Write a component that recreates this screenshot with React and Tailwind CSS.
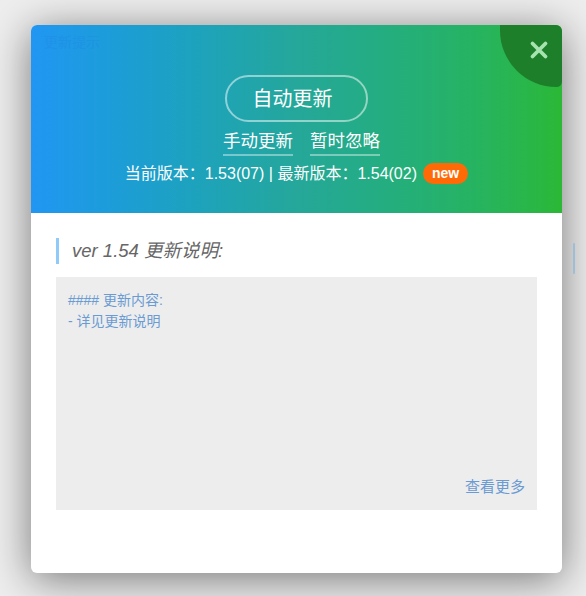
import React from "react";

export default function App() {
  const font = { fontFamily: '"Liberation Sans", "Noto Sans CJK SC", sans-serif' };
  return (
    <div
      className="relative w-[586px] h-[596px] overflow-hidden bg-[#eeeeee] pt-[25px] pl-[31px]"
      style={font}
    >
      <div className="relative w-[531px] h-[548px] rounded-[6px] bg-white shadow-[0_6px_42px_rgba(0,0,0,0.5)] overflow-hidden flex flex-col">
        {/* header */}
        <div className="relative h-[188px] bg-gradient-to-r from-[#2196f3] via-[#25a79a] to-[#2bb835] flex flex-col items-center pt-[50px]">
          <div className="absolute left-[13px] top-[7px] text-[14px] text-[#1f8fe6] opacity-60">更新提示</div>
          <div className="absolute right-0 top-0 w-[62px] h-[62px] bg-[#1e7f2b] rounded-bl-[100%] rounded-br-[6px] flex items-start justify-end pt-[15px] pr-[13px]">
            <svg width="20" height="20" viewBox="0 0 20 20">
              <path d="M3.5 3.5 L16.5 16.5 M16.5 3.5 L3.5 16.5" stroke="#a7e3ae" strokeWidth="3.8" strokeLinecap="round" />
            </svg>
          </div>
          <div className="w-[143px] h-[47px] rounded-full border-2 border-white/50 flex items-center justify-center text-white text-[20px] pt-[1px] pr-[8px]">
            自动更新
          </div>
          <div className="flex gap-[17px] mt-[7px] ml-[10px]">
            <span className="text-white text-[17.5px] leading-[25px] border-b-2 border-white/40">手动更新</span>
            <span className="text-white text-[17.5px] leading-[25px] border-b-2 border-white/40">暂时忽略</span>
          </div>
          <div className="flex items-center mt-[7px]">
            <span className="text-white text-[16px] leading-[21px]">当前版本：1.53(07) | 最新版本：1.54(02)</span>
            <span className="ml-[6px] h-[21px] px-[9px] rounded-full bg-[#ff6a06] text-white text-[14px] font-bold flex items-center">new</span>
          </div>
        </div>
        {/* body */}
        <div className="px-[25px] pt-[25px]">
          <div className="border-l-[3px] border-[#90caf9] pl-[13px] h-[26px] flex items-center text-[18.5px] italic text-[#666666]">
            ver 1.54 更新说明:
          </div>
          <div className="mt-[13px] h-[233px] bg-[#ededed] px-[12px] pt-[13px] pb-[13px] flex flex-col text-[#6a9bd3] text-[14px] leading-[21px]">
            <div>#### 更新内容:</div>
            <div>- 详见更新说明</div>
            <div className="mt-auto self-end text-[15px]">查看更多</div>
          </div>
        </div>
      </div>
      <div className="absolute left-[573px] top-[243px] w-[2px] h-[31px] bg-[#8ab8d8] opacity-70 rounded" />
    </div>
  );
}
